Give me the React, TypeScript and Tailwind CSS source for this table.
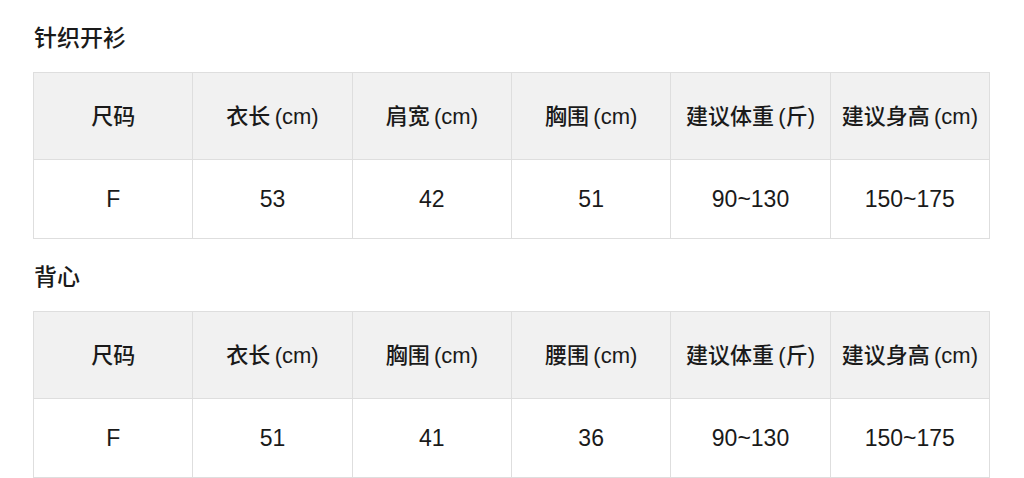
import React from 'react';

interface SizeTable {
  title:   string;
  headers: string[];
  row:     string[];
}

const TABLES: SizeTable[] = [
  {
    title:   '针织开衫',
    headers: ['尺码', '衣长\u2009(cm)', '肩宽\u2009(cm)', '胸围\u2009(cm)', '建议体重\u2009(斤)', '建议身高\u2009(cm)'],
    row:     ['F', '53', '42', '51', '90~130', '150~175'],
  },
  {
    title:   '背心',
    headers: ['尺码', '衣长\u2009(cm)', '胸围\u2009(cm)', '腰围\u2009(cm)', '建议体重\u2009(斤)', '建议身高\u2009(cm)'],
    row:     ['F', '51', '41', '36', '90~130', '150~175'],
  },
];

const FONT = { fontFamily: '"Liberation Sans", "Noto Sans CJK SC", sans-serif' };

export default function App() {
  return (
    <div className="w-[1024px] h-[478px] bg-white overflow-hidden pl-[33px] text-[#1a1a1a]" style={FONT}>
      {TABLES.map(t => (
        <section key={t.title} className="pt-[23px]">
          {/* Title */}
          <h2 className="text-[23px] leading-[30px] pl-[1px] mb-[19px] font-medium">{t.title}</h2>

          {/* Table */}
          <div className="w-[957px] grid grid-cols-6 border-t border-l border-[#dedede]">
            {t.headers.map(h => (
              <div key={h} className="h-[87px] flex items-center justify-center bg-[#f1f1f1] border-r border-b border-[#dedede] text-[22px] font-medium whitespace-nowrap">
                {h}
              </div>
            ))}
            {t.row.map((v, i) => (
              <div key={i} className="h-[79px] flex items-center justify-center border-r border-b border-[#dedede] text-[23px]">
                {v}
              </div>
            ))}
          </div>
        </section>
      ))}
    </div>
  );
}
